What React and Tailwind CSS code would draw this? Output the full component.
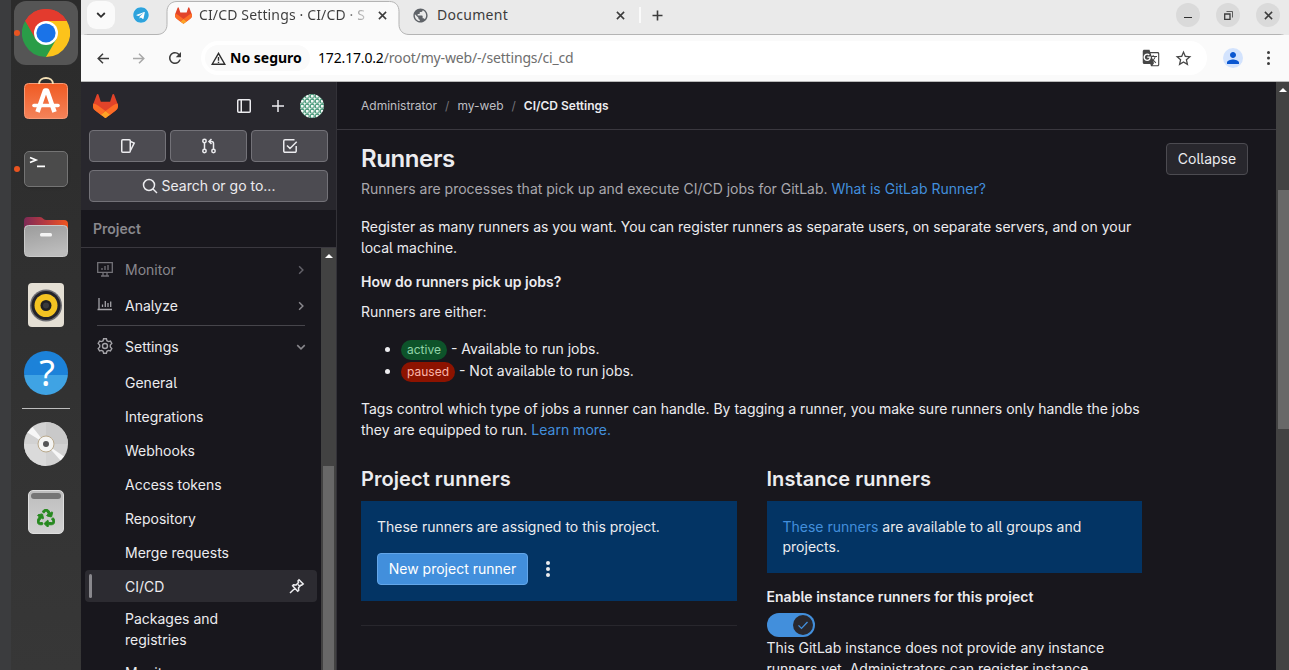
import React from "react";
import { MdGTranslate, MdStarBorder, MdPerson, MdPublic, MdRefresh } from "react-icons/md";
import { FaTelegram, FaRecycle } from "react-icons/fa";

function Tanuki({ className }) {
  return (
    <svg className={className} viewBox="0 0 25 24">
      <path fill="#E24329" d="m24.507 9.5-.034-.09L21.082.562a.896.896 0 0 0-1.694.091l-2.29 7.01H7.825L5.535.653a.898.898 0 0 0-1.694-.09L.451 9.411.416 9.5a6.297 6.297 0 0 0 2.09 7.278l.012.01.03.022 5.16 3.867 2.56 1.935 1.554 1.176a1.051 1.051 0 0 0 1.268 0l1.555-1.176 2.56-1.935 5.197-3.89.014-.01A6.297 6.297 0 0 0 24.507 9.5Z" />
      <path fill="#FC6D26" d="m24.507 9.5-.034-.09a11.44 11.44 0 0 0-4.56 2.051l-7.447 5.632 4.742 3.584 5.197-3.89.014-.01A6.297 6.297 0 0 0 24.507 9.5Z" />
      <path fill="#FCA326" d="m7.707 20.677 2.56 1.935 1.555 1.176a1.051 1.051 0 0 0 1.268 0l1.555-1.176 2.56-1.935-4.743-3.584-4.755 3.584Z" />
      <path fill="#FC6D26" d="M5.01 11.461a11.43 11.43 0 0 0-4.56-2.05L.416 9.5a6.297 6.297 0 0 0 2.09 7.278l.012.01.03.022 5.16 3.867 4.745-3.584-7.444-5.632Z" />
    </svg>
  );
}

function Icon({ children, className = "size-4", width = 1.5 }) {
  return (
    <svg className={className} viewBox="0 0 16 16" fill="none" stroke="currentColor" strokeWidth={width}>
      {children}
    </svg>
  );
}

/* ---------- Dock ---------- */

function DockItem({ children, running, active }) {
  return (
    <div className="relative flex h-[68px] w-full shrink-0 items-center justify-center">
      {active && <div className="absolute inset-x-[3px] inset-y-[2px] rounded-[12px] bg-[#555555]" />}
      {running && <div className="absolute top-[31px] left-[3px] size-[6px] rounded-full bg-[#e95420]" />}
      <div className="relative">{children}</div>
    </div>
  );
}

function Dock() {
  return (
    <div className="flex w-[70px] shrink-0 flex-col bg-linear-to-b from-[#2b2b2b] to-[#373737]">
      <div className="-mt-px" />
      <DockItem running active>
        <svg className="size-12" viewBox="0 0 48 48">
          <path fill="#e33b2e" d="M24 24 3.2 12A24 24 0 0 1 44.8 12Z" />
          <path fill="#fcc31b" d="M44.8 12A24 24 0 0 1 24 48L24 24 24 12Z" />
          <path fill="#2a9d48" d="M3.2 12A24 24 0 0 0 24 48L34.4 30 24 30Z" />
          <path fill="#e33b2e" d="M3.2 12A24 24 0 0 1 44.8 12H24L13.6 30Z" />
          <circle cx="24" cy="24" r="12" fill="#fff" />
          <circle cx="24" cy="24" r="9.6" fill="#1a73e8" />
        </svg>
      </DockItem>
      <DockItem>
        <svg className="mb-[2px] h-[46px] w-[46px]" viewBox="0 0 46 46">
          <defs>
            <linearGradient id="bag" x1="0" y1="0" x2="0" y2="1">
              <stop offset="0" stopColor="#f05a22" />
              <stop offset="1" stopColor="#f4835a" />
            </linearGradient>
          </defs>
          <rect x="1.500" y="6.500" width="43" height="35" rx="4" fill="url(#bag)" stroke="#f79a76" strokeWidth="1" />
          <path d="M16 7c0-8 14-8 14 0" fill="none" stroke="#f3dfb4" strokeWidth="2" />
          <path d="M14.5 35 22 13.500h2L31.500 35" fill="none" stroke="#fff" strokeWidth="4.600" strokeLinejoin="round" />
          <path d="M11 28.500h24" stroke="#fff" strokeWidth="3.600" strokeLinecap="round" />
        </svg>
      </DockItem>
      <DockItem running>
        <div className="h-9 w-11 rounded-[5px] border border-[#747474] bg-[#4b4b4b] shadow">
          <svg className="h-full w-full" viewBox="0 0 42 34" fill="none" stroke="#fff" strokeWidth="1.700">
            <path d="M5 5.500 11 8 5 10.500M12 14.300h8" />
          </svg>
        </div>
      </DockItem>
      <DockItem>
        <svg className="h-10 w-11" viewBox="0 0 44 40">
          <defs>
            <linearGradient id="folderBack">
              <stop offset="0" stopColor="#7d2a56" />
              <stop offset="0.500" stopColor="#b93a3f" />
              <stop offset="1" stopColor="#f0561f" />
            </linearGradient>
            <linearGradient id="folderFront" x1="0" y1="0" x2="0.300" y2="1">
              <stop offset="0" stopColor="#9b9b9b" />
              <stop offset="1" stopColor="#bcbcbc" />
            </linearGradient>
          </defs>
          <path d="M0 4a4 4 0 0 1 4-4h12c3 0 3 3 6 3h18a4 4 0 0 1 4 4v12H0Z" fill="url(#folderBack)" />
          <rect x="0.500" y="8.500" width="43" height="31" rx="4" fill="url(#folderFront)" stroke="#c9c9c9" />
          <rect x="16" y="16" width="12" height="3.500" rx="1.500" fill="#f4f4f4" />
        </svg>
      </DockItem>
      <DockItem>
        <svg className="h-11 w-9" viewBox="0 0 36 44">
          <rect width="36" height="44" rx="4" fill="#e4dfd4" />
          <circle cx="18" cy="22.500" r="16" fill="#6d6d72" />
          <circle cx="18" cy="22.500" r="14.500" fill="#23232a" />
          <circle cx="18" cy="22.500" r="11.500" fill="#f3c322" />
          <circle cx="18" cy="22.500" r="5.500" fill="#202022" />
          <circle cx="18" cy="22.500" r="3" fill="#3a3a3c" />
        </svg>
      </DockItem>
      <DockItem>
        <div className="flex size-11 flex-col items-center justify-center rounded-full bg-linear-to-b from-[#1c82d9] from-55% to-[#3fa3e4] to-55% font-['Noto_Sans',sans-serif] text-[36px] leading-none text-white">
          <span className="h-9 pl-[2px] leading-[35px]">?</span>
        </div>
      </DockItem>
      <div className="mx-auto mt-px h-px w-12 shrink-0 bg-[#bdbdbd]" />
      <div className="h-px shrink-0" />
      <DockItem>
        <svg className="size-11" viewBox="0 0 44 44">
          <circle cx="22" cy="22" r="22" fill="#d2d2d2" />
          <path d="M22 22 22 0A22 22 0 0 1 44 22Z" fill="#c9c9c9" />
          <path d="M22 22 0 22A22 22 0 0 0 22 44Z" fill="#dadada" />
          <path d="M22 22 3.500 10.500 8.500 5Z" fill="#f7f7f7" />
          <path d="M22 22 40 34.500 36.500 38.500Z" fill="#f7f7f7" />
          <circle cx="22" cy="22" r="8" fill="#f4f4f2" stroke="#b9a98c" strokeWidth="1" />
          <circle cx="22" cy="22" r="3" fill="#555" />
        </svg>
      </DockItem>
      <DockItem>
        <div className="flex h-11 w-9 flex-col items-center rounded-[5px] border border-[#dedede] bg-linear-to-b from-[#bdbdbd] to-[#d2d2d2] pt-[2px]">
          <div className="h-[6px] w-[30px] rounded-[3px] bg-[#757575]" />
          <FaRecycle className="mt-[10px] size-[18px] stroke-[#27891f] stroke-[28px] text-[#27891f]" />
        </div>
      </DockItem>
    </div>
  );
}

/* ---------- Browser chrome ---------- */

function CloseX({ className }) {
  return (
    <svg className={className} viewBox="0 0 10 10" stroke="#3c3c3c" strokeWidth="1.700">
      <path d="m1 1 8 8M9 1 1 9" />
    </svg>
  );
}

function TabStrip() {
  return (
    <div className="relative flex h-[35px] shrink-0 bg-[#eaeaea]">
      <svg className="absolute top-0 left-0 h-[35px] w-[1208px]" viewBox="0 0 1208 35" fill="#fafafa" stroke="#b4b4b4">
        <path d="M0 40V41c0-5 3-6.500 7-6.500H76c6 0 10-4 10-10V11.500c0-6 4-10 10-10H308.500c6 0 9.500 4 9.500 10V24.500c0 6 4 10 10 10H1198c6 0 9.500 3 9.500 7V45Z" />
      </svg>
      <div className="relative flex w-full items-center pb-[5px] text-[#3c3c3c]">
        <div className="ml-[6px] flex size-7 items-center justify-center rounded-[9px] bg-[#fafafa]">
          <svg className="h-2 w-[10px]" viewBox="0 0 10 8" fill="none" stroke="#2e2e2e" strokeWidth="1.800">
            <path d="m1.200 2 3.800 3.800L8.800 2" />
          </svg>
        </div>
        <div className="ml-[18px] flex size-4 items-center justify-center rounded-full bg-white">
          <FaTelegram className="size-4 shrink-0 text-[#2ea3dc]" />
        </div>
        <Tanuki className="ml-[26px] size-[17px]" />
        <span className="ml-[7px] w-[168px] overflow-hidden bg-linear-to-r from-[#3c3c3c] from-85% to-[#3c3c3c]/20 bg-clip-text font-['Noto_Sans',sans-serif] text-[14px] leading-5 tracking-[0.14px] whitespace-nowrap text-transparent">
          CI/CD Settings · CI/CD · S
        </span>
        <CloseX className="ml-[11px] size-[9px]" />
        <MdPublic className="ml-[25px] size-[17px] text-[#5f6368]" />
        <span className="ml-2 w-[170px] font-['Noto_Sans',sans-serif] text-[14px] leading-5 tracking-[0.28px]">Document</span>
        <CloseX className="ml-[9px] size-[9px]" />
        <div className="ml-[14px] h-4 w-[2px] bg-[#fafafa]" />
        <svg className="ml-[11px] size-[11px]" viewBox="0 0 11 11" stroke="#3c3c3c" strokeWidth="1.600">
          <path d="M5.500 0.500v10M0.500 5.500h10" />
        </svg>
        <div className="mr-[9px] ml-auto flex gap-4">
          <div className="flex size-6 items-center justify-center rounded-full bg-[#dadada]">
            <div className="mt-[5px] h-px w-2 bg-[#2e2e2e]" />
          </div>
          <div className="flex size-6 items-center justify-center rounded-full bg-[#dadada]">
            <svg className="size-[9px]" viewBox="0 0 9 9" fill="none" stroke="#3c3c3c">
              <path d="M.700 3h5.300v5.300H.700Z" strokeWidth="1.300" />
              <path d="M2.500.500h6v6" strokeWidth="0.800" />
            </svg>
          </div>
          <div className="flex size-6 items-center justify-center rounded-full bg-[#dadada]">
            <CloseX className="size-[9px]" />
          </div>
        </div>
      </div>
    </div>
  );
}

function Toolbar() {
  return (
    <div className="flex h-[47px] shrink-0 items-center border-b border-[#b9b9b9] bg-[#fafafa] text-[#474747]">
      <svg className="ml-4 h-[11px] w-3" viewBox="0 0 12 11" fill="none" stroke="#3c3c3c" strokeWidth="1.500">
        <path d="M12 5.500H1.300M6 .700 1.200 5.500 6 10.300" />
      </svg>
      <svg className="ml-6 h-[11px] w-3" viewBox="0 0 12 11" fill="none" stroke="#a8a8a8" strokeWidth="1.500">
        <path d="M0 5.500h10.700M6 .700l4.800 4.800L6 10.300" />
      </svg>
      <MdRefresh className="ml-[21px] size-[18px] text-[#3c3c3c]" />
      <div className="ml-[17px] flex h-[34px] w-[1006px] items-center rounded-full bg-white pr-[14px] pl-1">
        <div className="flex h-[26px] w-[105px] items-center rounded-full bg-[#fafafa] pl-[6px]">
          <svg className="h-[13px] w-[15px]" viewBox="0 0 15 13" fill="none" stroke="#2e2e2e" strokeWidth="1.400">
            <path d="M7.500 1.300 1.200 12.200H13.800ZM7.500 5v3.800M7.500 9.800v1.200" />
          </svg>
          <span className="ml-1 font-['Noto_Sans',sans-serif] text-[14px] leading-5 font-bold whitespace-nowrap text-black">
            No seguro
          </span>
        </div>
        <div className="ml-2 font-['Noto_Sans',sans-serif] text-[14px] leading-5 tracking-[-0.16px] whitespace-nowrap text-[#6e6e6e]">
          <span className="text-black">172.17.0.2</span>/root/my-web/-/settings/ci_cd
        </div>
        <MdGTranslate className="ml-auto size-[18px]" />
        <MdStarBorder className="ml-[14px] size-[19px]" />
      </div>
      <div className="ml-4 flex size-5 items-center justify-center rounded-full bg-[#d3e3fd]">
        <MdPerson className="size-[18px] text-[#0b57d0]" />
      </div>
      <svg className="mr-[19px] ml-auto h-[14px] w-[3px]" viewBox="0 0 3 14" fill="#3c3c3c">
        <circle cx="1.500" cy="1.500" r="1.500" />
        <circle cx="1.500" cy="7" r="1.500" />
        <circle cx="1.500" cy="12.500" r="1.500" />
      </svg>
    </div>
  );
}

/* ---------- GitLab sidebar ---------- */

const SUB_ITEMS = ["General", "Integrations", "Webhooks", "Access tokens", "Repository", "Merge requests"];

function AvatarPattern() {
  return (
    <svg className="size-6 rounded-full" viewBox="0 0 24 24">
      <defs>
        <pattern id="weave" width="5" height="5" patternUnits="userSpaceOnUse">
          <rect width="5" height="5" fill="#f3f8f5" />
          <path d="M.500.500h3.500v3.500H.500Z" fill="none" stroke="#3f9474" strokeWidth="0.900" />
          <path d="M4 2.200h1M2.200 4v1" stroke="#3f9474" strokeWidth="0.900" />
        </pattern>
      </defs>
      <rect width="24" height="24" fill="url(#weave)" />
    </svg>
  );
}

function TopNavItem({ icon, label, muted, open }) {
  return (
    <div
      className={
        muted
          ? "flex h-8 shrink-0 items-center pr-[10px] pl-3 text-[#89888d]"
          : "flex h-8 shrink-0 items-center pr-[10px] pl-3 text-[#ececef]"
      }
    >
      <span className={muted ? "text-[#737278]" : "text-[#a4a3a8]"}>{icon}</span>
      <span className="ml-3 flex-1">{label}</span>
      <Icon className={muted ? "mt-[2px] size-3 text-[#626168]" : "mt-[2px] size-3 text-[#89888d]"} width={2}>
        {open ? <path d="m3 5.500 5 5 5-5" /> : <path d="m5.500 3 5 5-5 5" />}
      </Icon>
    </div>
  );
}

function Sidebar() {
  return (
    <div className="flex w-64 shrink-0 flex-col border-r border-[#333238] bg-[#18171d] text-[14px] leading-[21px] text-[#ececef]">
      <div className="h-32 shrink-0 bg-[#28272d] px-2">
        <div className="flex h-12 items-center pl-1">
          <Tanuki className="mr-px h-6 w-[25px]" />
          <Icon className="ml-[117px] size-4">
            <rect x="1.750" y="1.750" width="12.500" height="12.500" rx="1" />
            <path d="M5.250 2v12" />
          </Icon>
          <Icon className="ml-[18px] size-4">
            <path d="M8 2v12M2 8h12" />
          </Icon>
          <div className="ml-[14px]">
            <AvatarPattern />
          </div>
        </div>
        <div className="flex gap-1">
          <div className="flex h-8 w-[77px] items-center justify-center rounded-[4px] border border-[#737278] bg-[#4c4b51]">
            <Icon>
              <rect x="1.750" y="1.750" width="8.500" height="12.500" rx="1" />
              <path d="m10.500 3.500 3.700 1.600-3.700 7.400" />
            </Icon>
          </div>
          <div className="flex h-8 w-[77px] items-center justify-center rounded-[4px] border border-[#737278] bg-[#4c4b51]">
            <Icon>
              <circle cx="3.500" cy="3" r="1.700" />
              <circle cx="3.500" cy="13" r="1.700" />
              <circle cx="12.500" cy="13" r="1.700" />
              <path d="M3.500 5v6M12.500 11V5.500a2 2 0 0 0-2-2H8.500M10.500 1 8 3.500 10.500 6" />
            </Icon>
          </div>
          <div className="flex h-8 w-[77px] items-center justify-center rounded-[4px] border border-[#737278] bg-[#4c4b51]">
            <Icon>
              <path d="M14.200 8v5a1.250 1.250 0 0 1-1.250 1.250H3A1.250 1.250 0 0 1 1.750 13V3A1.250 1.250 0 0 1 3 1.750h9.500M5 7.500l3 3 6.700-6.700" />
            </Icon>
          </div>
        </div>
        <div className="mt-2 flex h-8 w-[239px] items-center justify-center rounded-[4px] border border-[#737278] bg-[#4c4b51] pb-px">
          <Icon className="mr-1 size-4">
            <circle cx="7" cy="7" r="5.500" />
            <path d="m11 11 4 4" />
          </Icon>
          Search or go to...
        </div>
      </div>
      <div className="flex h-[38px] shrink-0 items-center border-b border-[#3a383f] pl-3 font-semibold text-[#89888d]">Project</div>
      <div className="flex min-h-0 flex-1 overflow-hidden">
        <div className="flex w-60 shrink-0 flex-col px-1 pt-[5px]">
          <TopNavItem
            muted
            label="Monitor"
            icon={
              <Icon width={1.300}>
                <path d="M.700 1.700h14.600v9.600H.700ZM4 15h8M6 11.500V15M10 11.500V15M5 9V7M8 9V5M11 9V4" />
              </Icon>
            }
          />
          <div className="h-1 shrink-0" />
          <TopNavItem
            label="Analyze"
            icon={
              <Icon width={1.300}>
                <path d="M2 1v12.200M.500 12.500H15M5.500 10V7.500M8.300 10V4M11 10V6M13.700 10V4.500" />
              </Icon>
            }
          />
          <div className="mx-3 my-1 h-px shrink-0 bg-[#46454b]" />
          <TopNavItem
            open
            label="Settings"
            icon={
              <Icon width={1.400}>
                <path d="M6.600.700h2.800l.500 2 1.500.900 2-.600 1.400 2.500-1.500 1.500v2l1.500 1.500-1.400 2.500-2-.600-1.500.900-.500 2H6.600l-.500-2-1.500-.900-2 .600L1.200 10.500 2.700 9V7L1.200 5.500 2.600 3l2 .600 1.500-.900Z" />
                <circle cx="8" cy="8" r="2.500" />
              </Icon>
            }
          />
          <div className="mt-1 flex flex-col gap-[2px]">
            {SUB_ITEMS.map((label) => (
              <div key={label} className="flex h-8 shrink-0 items-center pl-10">
                {label}
              </div>
            ))}
            <div className="flex h-8 w-[232px] shrink-0 items-center rounded-[4px] bg-[#2c2b31] pl-1">
              <div className="h-6 w-[3px] rounded-full bg-[#89888d]" />
              <span className="ml-[33px] flex-1">CI/CD</span>
              <Icon className="mr-3 size-4">
                <path d="m10 1.800 4.200 4.200-1.500 1.200-.700-.200-2.500 2.800.200 2.700-1 .700L3.600 7.800l.900-1 2.600.200L9.500 4.500 9 3ZM6 10.200 1 15M9 6.500l2.200 2.200" />
              </Icon>
            </div>
            <div className="-mt-px flex h-[51px] w-[170px] shrink-0 items-center pl-10">Packages and registries</div>
            <div className="flex h-8 shrink-0 items-center pl-10">Monitor</div>
          </div>
        </div>
        <div className="flex w-[15px] shrink-0 flex-col items-center bg-[#424242]">
          <div className="mt-[6px] h-0 w-0 border-x-4 border-b-4 border-x-transparent border-b-white" />
          <div className="mt-[208px] w-[11px] flex-1 bg-[#686868]" />
        </div>
      </div>
    </div>
  );
}

/* ---------- Main content ---------- */

function Main() {
  return (
    <div className="flex w-[939px] shrink-0 flex-col overflow-hidden bg-[#18171d] text-[14px] leading-[21px] text-[#ececef]">
      <div className="flex h-12 shrink-0 items-center gap-2 border-b border-[#3a383f] pl-6 text-[12px] leading-4 text-[#bfbfc3]">
        <span>Administrator</span>
        <span className="text-[#737278]">/</span>
        <span>my-web</span>
        <span className="text-[#737278]">/</span>
        <span className="font-semibold text-[#ececef]">CI/CD Settings</span>
      </div>
      <div className="flex shrink-0 justify-between pt-[13px] pr-7 pl-6">
        <div>
          <h2 className="h-8 text-[24px] leading-8 font-semibold tracking-[-0.4px]">Runners</h2>
          <p className="mt-[3px] h-[21px] whitespace-nowrap text-[#a9a8ad]">
            Runners are processes that pick up and execute CI/CD jobs for GitLab.{" "}
            <a className="text-[#428fdc]">What is GitLab Runner?</a>
          </p>
        </div>
        <button className="h-8 w-[82px] rounded-[4px] border border-[#4c4b51] bg-[#28272d] pb-[2px]">Collapse</button>
      </div>
      <div className="w-[806px] shrink-0 pt-[17px] pl-6">
        <p className="whitespace-nowrap">
          Register as many runners as you want. You can register runners as separate users, on separate servers, and on your
          <br />
          local machine.
        </p>
        <p className="mt-[13px] font-semibold">How do runners pick up jobs?</p>
        <p className="mt-[9px]">Runners are either:</p>
        <ul className="mt-4 flex flex-col gap-px">
          <li className="flex h-[21px] items-center pl-6">
            <span className="mt-[2px] size-[5px] rounded-full bg-[#ececef]" />
            <span className="mt-[3px] ml-[11px] flex h-5 items-center rounded-full bg-[#0d532a] px-[6px] pb-px text-[12px] leading-4 text-[#91d4a8]">
              active
            </span>
            <span className="ml-1">- Available to run jobs.</span>
          </li>
          <li className="flex h-[21px] items-center pl-6">
            <span className="mt-[2px] size-[5px] rounded-full bg-[#ececef]" />
            <span className="mt-[3px] ml-[11px] flex h-5 items-center rounded-full bg-[#8d1300] px-[6px] pb-px text-[12px] leading-4 text-[#fcb5aa]">
              paused
            </span>
            <span className="ml-1">- Not available to run jobs.</span>
          </li>
        </ul>
        <p className="mt-[17px] whitespace-nowrap">
          Tags control which type of jobs a runner can handle. By tagging a runner, you make sure runners only handle the jobs
          <br />
          they are equipped to run. <a className="text-[#428fdc]">Learn more.</a>
        </p>
        <div className="mt-[25px] flex gap-[30px]">
          <div className="w-[376px] shrink-0">
            <h3 className="text-[20px] leading-7 font-semibold tracking-[0.06px]">Project runners</h3>
            <div className="mt-2 h-[100px] bg-[#033464] px-4 pt-4">
              <p className="leading-5">These runners are assigned to this project.</p>
              <div className="mt-4 flex items-center">
                <button className="h-8 w-[151px] rounded-[4px] border border-[#63a6e9] bg-[#428fdc] pb-[2px] whitespace-nowrap text-white">
                  New project runner
                </button>
                <svg className="ml-[18px] h-4 w-1" viewBox="0 0 4 16" fill="#ececef">
                  <circle cx="2" cy="2" r="2" />
                  <circle cx="2" cy="8" r="2" />
                  <circle cx="2" cy="14" r="2" />
                </svg>
              </div>
            </div>
            <div className="mt-6 h-px bg-[#28272d]" />
          </div>
          <div className="ml-[-0.5px] w-[375px] shrink-0">
            <h3 className="text-[20px] leading-7 font-semibold tracking-[0.06px]">Instance runners</h3>
            <div className="mt-2 h-[72px] bg-[#033464] px-4 pt-4">
              <p className="leading-5 whitespace-nowrap">
                <a className="text-[#428fdc]">These runners</a> are available to all groups and
                <br />
                projects.
              </p>
            </div>
            <p className="mt-[13px] font-semibold tracking-[0.02px]">Enable instance runners for this project</p>
            <div className="mt-[6px] flex h-6 w-12 items-center justify-end rounded-full bg-[#428fdc] pr-[2px]">
              <div className="flex size-5 items-center justify-center rounded-full bg-[#28272d] text-[#428fdc]">
                <Icon className="size-3" width={1.800}>
                  <path d="m2 8.500 4 4L14 4" />
                </Icon>
              </div>
            </div>
            <p className="whitespace-nowrap">
              This GitLab instance does not provide any instance
              <br />
              runners yet. Administrators can register instance
            </p>
          </div>
        </div>
      </div>
    </div>
  );
}

export default function App() {
  return (
    <div className="flex h-[670px] w-[1289px] overflow-hidden bg-[#18171d]">
      <div className="w-[11px] shrink-0 bg-[#3b3c3e]" />
      <Dock />
      <div className="flex min-w-0 flex-1 flex-col">
        <TabStrip />
        <Toolbar />
        <div className="flex min-h-0 flex-1 overflow-hidden font-['Inter',sans-serif] [font-feature-settings:'cv05']">
          <Sidebar />
          <Main />
          <div className="flex w-[13px] shrink-0 flex-col items-end bg-[#424242]">
            <div className="mt-[6px] mr-[2px] h-0 w-0 border-x-4 border-b-4 border-x-transparent border-b-white" />
            <div className="mt-[98px] h-[239px] w-[11px] bg-[#686868]" />
          </div>
        </div>
      </div>
    </div>
  );
}
